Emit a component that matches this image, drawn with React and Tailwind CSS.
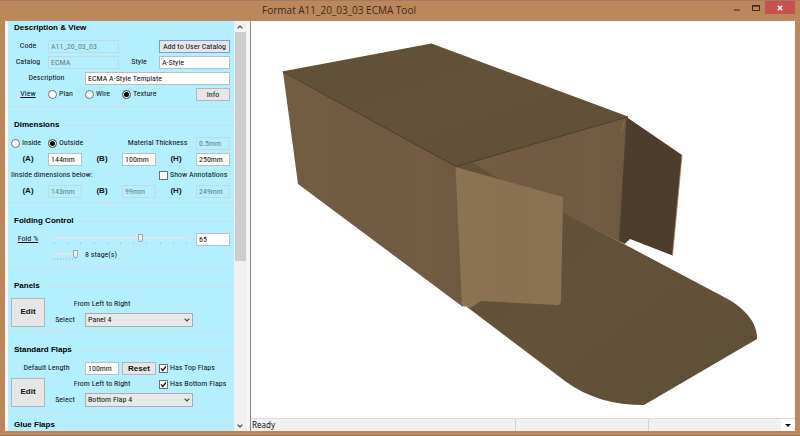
import React from "react";

const FIELD = "h-[13px] w-full min-w-0 border px-[2px] leading-[11px] outline-none ";
const ENABLED = "border-[#b4c2c8] bg-white text-[#111]";
const DISABLED = "border-[#c6d8dc] bg-[#b4efff] text-[#6b7c81]";
const BUTTON = "border border-[#b5b5b5] bg-[#e6e6e6] text-center text-[#111] ";
const BOLD = "font-['Liberation_Sans',Arial,sans-serif] text-[8px] font-bold ";

function Section({ title, className = "pb-1 mb-3", children }) {
  return (
    <section className={"border-b border-[#c8dfe5] " + className}>
      <h2 className={BOLD + "flex h-3 items-center gap-1 pl-[6px] leading-3 text-black"}>
        {title}
        <span className="h-px flex-1 bg-[#c8dfe5]" />
      </h2>
      <div className="grid auto-rows-[16px] grid-cols-6 items-center gap-x-[3px] pt-1 pr-1 pl-[3px]">
        {children}
      </div>
    </section>
  );
}

function Field({ label, value, disabled, className = "" }) {
  return (
    <div className={"flex " + className}>
      <input
        aria-label={label}
        defaultValue={value}
        disabled={disabled}
        className={FIELD + (disabled ? DISABLED : ENABLED)}
      />
    </div>
  );
}

function Label({ children, className = "" }) {
  return <span className={"whitespace-nowrap text-center " + className}>{children}</span>;
}

function Radio({ name, label, checked }) {
  return (
    <label className="flex items-center gap-[2px] whitespace-nowrap">
      <input
        type="radio"
        name={name}
        defaultChecked={checked}
        className="size-[9px] shrink-0 appearance-none rounded-full border border-[#707070] bg-white checked:bg-black checked:shadow-[inset_0_0_0_1px_white]"
      />
      {label}
    </label>
  );
}

function Check({ label, checked }) {
  return (
    <label className="col-span-2 flex items-center gap-[2px] whitespace-nowrap">
      <span className="grid size-[9px] shrink-0">
        <input
          type="checkbox"
          defaultChecked={checked}
          className="peer col-start-1 row-start-1 size-[9px] appearance-none border border-[#707070] bg-white"
        />
        <svg
          viewBox="0 0 9 9"
          className="pointer-events-none invisible col-start-1 row-start-1 size-[9px] peer-checked:visible"
        >
          <path d="M2 4.4 3.8 6.4 7 2.4" fill="none" stroke="#111" strokeWidth="1.4" />
        </svg>
      </span>
      {label}
    </label>
  );
}

function Select({ id, value }) {
  return (
    <>
      <label htmlFor={id} className="text-center">
        Select
      </label>
      <div className="col-span-3 grid items-center">
        <select
          id={id}
          className="col-start-1 row-start-1 h-[14px] w-full appearance-none border border-[#acacac] bg-[#e8e8e8] px-[2px] text-[#111]"
        >
          <option>{value}</option>
        </select>
        <svg
          viewBox="0 0 6 4"
          className="pointer-events-none col-start-1 row-start-1 mr-[3px] h-1 w-[6px] justify-self-end"
        >
          <path d="M.6 .6 3 3 5.4 .6" fill="none" stroke="#444" strokeWidth="1.2" />
        </svg>
      </div>
    </>
  );
}

function Slider({ label, max, value, ticks, className }) {
  return (
    <div className={"flex flex-col pl-1 " + className}>
      <input
        type="range"
        aria-label={label}
        min="0"
        max={max}
        defaultValue={value}
        className="h-[9px] w-full appearance-none bg-transparent [&::-webkit-slider-runnable-track]:h-[2px] [&::-webkit-slider-runnable-track]:bg-[#dfe4e6] [&::-webkit-slider-thumb]:-mt-[3px] [&::-webkit-slider-thumb]:h-2 [&::-webkit-slider-thumb]:w-[5px] [&::-webkit-slider-thumb]:appearance-none [&::-webkit-slider-thumb]:rounded-b-[2px] [&::-webkit-slider-thumb]:border [&::-webkit-slider-thumb]:border-[#9fa6a9] [&::-webkit-slider-thumb]:bg-[#eeeeee]"
      />
      <div className="flex h-[3px] justify-between px-[2px]">
        {Array.from({ length: ticks }, (_, i) => (
          <span key={i} className="h-[2px] w-px bg-[#b3ccd3]" />
        ))}
      </div>
    </div>
  );
}

function EditButton() {
  return <button className={BUTTON + BOLD + "row-span-2 h-[29px]"}>Edit</button>;
}

function Sidebar() {
  return (
    <div className="min-w-0 flex-1 overflow-hidden bg-[#b4efff] pt-px">
      <Section title="Description & View">
        <Label>Code</Label>
        <Field label="Code" value="A11_20_03_03" disabled className="col-span-2" />
        <button className="col-span-2 col-start-5 h-[13px] whitespace-nowrap border border-[#6ba0f0] bg-[#e6e6e6] leading-[11px] text-[#111]">
          Add to User Catalog
        </button>
        <Label>Catalog</Label>
        <Field label="Catalog" value="ECMA" disabled className="col-span-2" />
        <Label>Style</Label>
        <Field label="Style" value="A-Style" className="col-span-2" />
        <Label className="col-span-2">Description</Label>
        <Field label="Description" value="ECMA A-Style Template" className="col-span-4" />
        <Label className="underline">View</Label>
        <Radio name="view" label="Plan" />
        <Radio name="view" label="Wire" />
        <Radio name="view" label="Texture" checked />
        <button className={BUTTON + "col-start-6 h-[13px] leading-[11px]"}>Info</button>
      </Section>

      <Section title="Dimensions" className="mb-3 pb-[3px]">
        <Radio name="side" label="Inside" />
        <Radio name="side" label="Outside" checked />
        <Label className="col-span-2 col-start-4">Material Thickness</Label>
        <Field label="Material Thickness" value="0.5mm" disabled />
        <Label className={BOLD}>(A)</Label>
        <Field label="A" value="144mm" />
        <Label className={BOLD}>(B)</Label>
        <Field label="B" value="100mm" />
        <Label className={BOLD}>(H)</Label>
        <Field label="H" value="250mm" />
        <span className="col-span-4 whitespace-nowrap">Iinside dimensions below:</span>
        <Check label="Show Annotations" />
        <Label className={BOLD}>(A)</Label>
        <Field label="Inside A" value="143mm" disabled />
        <Label className={BOLD}>(B)</Label>
        <Field label="Inside B" value="99mm" disabled />
        <Label className={BOLD}>(H)</Label>
        <Field label="Inside H" value="249mm" disabled />
      </Section>

      <Section title="Folding Control">
        <Label className="underline">Fold %</Label>
        <Slider label="Fold %" max="100" value="65" ticks={11} className="col-span-4 pr-1" />
        <Field label="Fold percent" value="65" />
        <Slider label="Stages" max="8" value="8" ticks={8} className="col-start-2 pr-1" />
        <span className="col-span-2 whitespace-nowrap">8 stage(s)</span>
      </Section>

      <Section title="Panels" className="mb-3 pb-[3px]">
        <EditButton />
        <Label className="col-span-3">From Left to Right</Label>
        <span className="col-span-2" />
        <Select id="panel" value="Panel 4" />
      </Section>

      <Section title="Standard Flaps" className="mb-[6px] pb-1">
        <Label className="col-span-2">Default Length</Label>
        <Field label="Default Length" value="100mm" />
        <button className={BUTTON + BOLD + "h-[13px] leading-[11px]"}>Reset</button>
        <Check label="Has Top Flaps" checked />
        <EditButton />
        <Label className="col-span-3">From Left to Right</Label>
        <Check label="Has Bottom Flaps" checked />
        <Select id="flap" value="Bottom Flap 4" />
      </Section>

      <Section title="Glue Flaps" />
    </div>
  );
}

function ScrollBar() {
  return (
    <div className="flex w-[13px] flex-col items-center bg-[#f0f0f0] pr-px">
      <button aria-label="Scroll up" className="flex h-[11px] items-center">
        <svg viewBox="0 0 6 4" className="h-1 w-[6px]">
          <path d="M.6 3.4 3 1 5.4 3.4" fill="none" stroke="#444" strokeWidth="1.2" />
        </svg>
      </button>
      <div className="w-[11px] flex-1">
        <div className="h-[59%] bg-[#cdcdcd]" />
      </div>
      <button aria-label="Scroll down" className="flex h-[11px] items-center">
        <svg viewBox="0 0 6 4" className="h-1 w-[6px]">
          <path d="M.6 .6 3 3 5.4 .6" fill="none" stroke="#444" strokeWidth="1.2" />
        </svg>
      </button>
    </div>
  );
}

function Carton() {
  return (
    <svg
      viewBox="251 21 544 397"
      className="min-h-0 w-full flex-1"
      role="img"
      aria-label="Folded carton preview"
    >
      <defs>
        <linearGradient id="side" x1="0" y1="0" x2="1" y2="0">
          <stop offset="0" stopColor="#725d43" />
          <stop offset=".35" stopColor="#735b42" />
          <stop offset=".55" stopColor="#6f5a41" />
          <stop offset=".8" stopColor="#735c43" />
          <stop offset="1" stopColor="#6d5940" />
        </linearGradient>
        <linearGradient id="top" x1="0" y1="0" x2="1" y2="1">
          <stop offset="0" stopColor="#615038" />
          <stop offset=".5" stopColor="#63513a" />
          <stop offset="1" stopColor="#604f37" />
        </linearGradient>
        <linearGradient id="front" x1="0" y1="0" x2="1" y2="0">
          <stop offset="0" stopColor="#8b7353" />
          <stop offset=".5" stopColor="#887051" />
          <stop offset="1" stopColor="#8b7253" />
        </linearGradient>
      </defs>
      <path
        d="M500 180 563 212 622 243 724 297 C744 307 758 323 757 339 L644 405 C614 405 588 398 565 381 L467 307Z"
        fill="url(#top)"
      />
      <path d="M456 166 628 116 620 242 563 213 500 200 457 190Z" fill="url(#side)" />
      <path d="M283 72 456.500 166 463 307 298 184Z" fill="url(#side)" />
      <path d="M456 167 471 162 503 181 480 180Z" fill="#625038" />
      <path d="M282 71.500 431.500 43.500 628 116.500 456 167Z" fill="url(#top)" />
      <path d="M283 72 456 166.500 627.500 117" fill="none" stroke="#4a3b27" strokeWidth=".9" />
      <path d="M626.500 117 682 155 672.500 255.500 630 239 624.500 244 619 241Z" fill="#4d3d2c" />
      <path d="M682 155 672.500 255.500" stroke="#a08563" strokeWidth=".8" />
      <path
        d="M455.500 167 563 197 561 301 Q561 305 557 305 L481 301 471 307.500 462 306Z"
        fill="url(#front)"
      />
      <path d="M624.500 120 621 133" stroke="#8a7152" strokeWidth=".8" />
    </svg>
  );
}

function TitleBar() {
  return (
    <header className="flex h-[21px] shrink-0 items-start border-t border-[#a27b60] pr-[5px]">
      <h1 className="flex-1 pr-[49px] text-center font-['Open_Sans',sans-serif] text-[10px] leading-[18px] text-[#3a2c22]">
        Format A11_20_03_03 ECMA Tool
      </h1>
      <button aria-label="Minimize" className="flex h-[13px] w-5 items-center justify-center">
        <svg viewBox="0 0 6 8" className="h-2 w-[6px]">
          <path d="M0 6h6" stroke="#4b3a2d" strokeWidth="1.200" />
        </svg>
      </button>
      <button aria-label="Maximize" className="flex h-[13px] w-[18px] items-center justify-center">
        <svg viewBox="0 0 8 6" className="h-[6px] w-2">
          <path d="M.5 1v4.500h7V1" fill="none" stroke="#33291f" />
          <path d="M0 .8h8" stroke="#33291f" strokeWidth="1.600" />
        </svg>
      </button>
      <button
        aria-label="Close"
        className="flex h-[13px] w-[30px] items-center justify-center bg-[#c75050]"
      >
        <svg viewBox="0 0 6 6" className="size-[6px]">
          <path d="M.8 .8 5.200 5.200M5.200 .8 .8 5.200" stroke="#fff" strokeWidth="1.400" />
        </svg>
      </button>
    </header>
  );
}

function StatusBar() {
  return (
    <footer className="flex h-[13px] shrink-0 items-stretch border-t border-[#dcdcdc] bg-[#f0f0f0] font-['Noto_Sans',sans-serif] text-[8px] leading-3">
      <span className="flex-1 pl-px">Ready</span>
      <span className="w-[133px] border-l border-[#d4d4d4]" />
      <span className="w-[133px] border-l border-[#d4d4d4]" />
      <button aria-label="More" className="flex w-[14px] items-center justify-center bg-white">
        <svg viewBox="0 0 6 3" className="h-[3px] w-[6px]">
          <path d="M0 0h6L3 3z" fill="#111" />
        </svg>
      </button>
    </footer>
  );
}

export default function App() {
  return (
    <div className="flex h-screen min-h-[436px] flex-col border-b border-[#94745c] bg-[#bc875a] font-['Roboto_Condensed',Roboto,sans-serif] text-[8px] leading-3 text-[#111]">
      <TitleBar />
      <main className="mx-[5px] mb-1 flex min-h-0 flex-1 bg-white">
        <div className="flex w-[246px] shrink-0 border-r border-[#8a8a8a] bg-[#f7f7f7] pr-[3px] pl-[3px]">
          <Sidebar />
          <ScrollBar />
        </div>
        <div className="flex min-w-0 flex-1 flex-col">
          <Carton />
          <StatusBar />
        </div>
      </main>
    </div>
  );
}
